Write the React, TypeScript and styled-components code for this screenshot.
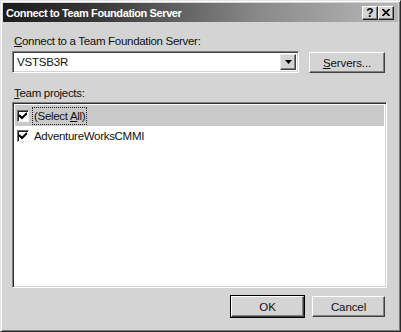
import React from "react";
import styled, { createGlobalStyle } from "styled-components";

const GlobalStyle = createGlobalStyle`
  html, body {
    margin: 0;
    padding: 0;
    background: #d4d4d4;
  }
  * {
    box-sizing: border-box;
  }
`;

const Window = styled.div`
  width: 401px;
  height: 332px;
  background: #d4d4d4;
  border-top: 1px solid #e4e4e4;
  border-left: 1px solid #e4e4e4;
  border-right: 1px solid #2a2a2a;
  border-bottom: 1px solid #2a2a2a;
  box-shadow: inset 1px 1px 0 #ffffff, inset -1px -1px 0 #7a7a7a;
  padding: 2px;
  display: flex;
  flex-direction: column;
  font-family: "Liberation Sans", Arial, sans-serif;
  font-size: 11px;
  color: #111;
`;

const TitleBar = styled.div`
  height: 19px;
  display: flex;
  align-items: center;
  justify-content: space-between;
  padding: 0 4px 0 3px;
  background: linear-gradient(to right, #1c1c1c 0%, #3a3a3a 25%, #8a8a8a 65%, #b8b8b8 100%);
`;

const Title = styled.span`
  color: #fff;
  font-weight: bold;
  font-size: 11px;
  letter-spacing: -0.4px;
`;

const TitleButtons = styled.div`
  display: flex;
`;

const TitleButton = styled.div`
  width: 16px;
  height: 14px;
  background: #d4d4d4;
  border-top: 1px solid #fff;
  border-left: 1px solid #fff;
  border-right: 1px solid #222;
  border-bottom: 1px solid #222;
  box-shadow: inset -1px -1px 0 #808080;
  display: flex;
  align-items: center;
  justify-content: center;
  font-weight: bold;
  font-size: 12px;
  color: #000;
  line-height: 1;
`;

const Content = styled.div`
  flex: 1;
  display: flex;
  flex-direction: column;
  padding: 12px 12px 0 9px;
`;

const Label = styled.div<{ $top?: number }>`
  font-size: 11.5px;
  line-height: 14px;
  margin-left: 2px;
  margin-top: ${(p) => p.$top ?? 0}px;
  letter-spacing: -0.3px;
`;

const Key = styled.span`
  text-decoration: underline;
  text-underline-offset: 1px;
`;

const ServerRow = styled.div`
  display: flex;
  align-items: flex-start;
  gap: 9px;
  margin-top: 3px;
`;

const Combo = styled.div`
  width: 287px;
  height: 22px;
  background: #fff;
  border-top: 1px solid #808080;
  border-left: 1px solid #808080;
  border-right: 1px solid #fff;
  border-bottom: 1px solid #fff;
  box-shadow: inset 1px 1px 0 #404040, inset -1px -1px 0 #d4d4d4;
  display: flex;
  align-items: center;
  padding: 2px 2px 2px 4px;
`;

const ComboText = styled.span`
  flex: 1;
  font-size: 11.5px;
  letter-spacing: -0.2px;
`;

const DropButton = styled.div`
  width: 16px;
  height: 16px;
  background: #d4d4d4;
  border-top: 1px solid #e8e8e8;
  border-left: 1px solid #e8e8e8;
  border-right: 1px solid #404040;
  border-bottom: 1px solid #404040;
  box-shadow: inset -1px -1px 0 #808080;
  display: flex;
  align-items: center;
  justify-content: center;
`;

const PushButton = styled.div<{ $def?: boolean; $w: number }>`
  width: ${(p) => p.$w}px;
  height: 23px;
  background: #d4d4d4;
  border: 1px solid ${(p) => (p.$def ? "#000" : "transparent")};
  display: flex;
  font-size: 11.5px;
`;

const PushFace = styled.div`
  flex: 1;
  border-top: 1px solid #fff;
  border-left: 1px solid #fff;
  border-right: 1px solid #404040;
  border-bottom: 1px solid #404040;
  box-shadow: inset -1px -1px 0 #808080;
  display: flex;
  align-items: center;
  justify-content: center;
  letter-spacing: -0.1px;
`;

const ListBox = styled.div`
  margin-top: 2px;
  height: 186px;
  width: 375px;
  background: #fff;
  border-top: 1px solid #808080;
  border-left: 1px solid #808080;
  border-right: 1px solid #fff;
  border-bottom: 1px solid #fff;
  box-shadow: inset 1px 1px 0 #303030, inset -1px -1px 0 #d4d4d4;
  padding: 2px 2px;
  display: flex;
  flex-direction: column;
`;

const Row = styled.div<{ $sel?: boolean }>`
  height: ${(p) => (p.$sel ? 21 : 20)}px;
  display: flex;
  align-items: center;
  padding-left: 2px;
  background: ${(p) => (p.$sel ? "#c9c9c9" : "transparent")};
`;

const Check = styled.div`
  width: 12px;
  height: 12px;
  background: #fff;
  border-top: 1px solid #707070;
  border-left: 1px solid #707070;
  border-right: 1px solid #f4f4f4;
  border-bottom: 1px solid #f4f4f4;
  box-shadow: inset 1px 1px 0 #202020;
  display: flex;
  align-items: center;
  justify-content: center;
  margin-right: 4px;
`;

const ItemText = styled.span<{ $focus?: boolean }>`
  font-size: 11.5px;
  line-height: 14px;
  padding: 1px 1px;
  outline: ${(p) => (p.$focus ? "1px dotted #222" : "none")};
  outline-offset: 0;
  letter-spacing: -0.3px;
`;

const Footer = styled.div`
  display: flex;
  justify-content: flex-end;
  gap: 6px;
  margin-top: 7px;
`;

const Tick = () => (
  <svg width="8" height="8" viewBox="0 0 8 8">
    <path d="M0 3 L3 6 L8 1" stroke="#000" strokeWidth="2" fill="none" />
  </svg>
);

const Arrow = () => (
  <svg width="7" height="4" viewBox="0 0 7 4">
    <path d="M0 0 H7 L3.5 4 Z" fill="#000" />
  </svg>
);

const App: React.FC = () => {
  return (
    <>
      <GlobalStyle />
      <Window>
        <TitleBar>
          <Title>Connect to Team Foundation Server</Title>
          <TitleButtons>
            <TitleButton>?</TitleButton>
            <TitleButton>
              <svg width="8" height="7" viewBox="0 0 8 7">
                <path d="M0.5 0 L7.5 7 M7.5 0 L0.5 7" stroke="#000" strokeWidth="1.6" />
              </svg>
            </TitleButton>
          </TitleButtons>
        </TitleBar>
        <Content>
          <Label>
            <Key>C</Key>onnect to a Team Foundation Server:
          </Label>
          <ServerRow>
            <Combo>
              <ComboText>VSTSB3R</ComboText>
              <DropButton>
                <Arrow />
              </DropButton>
            </Combo>
            <PushButton $w={78}>
              <PushFace>
                <span>
                  <Key>S</Key>ervers...
                </span>
              </PushFace>
            </PushButton>
          </ServerRow>
          <Label $top={12}>
            <Key>T</Key>eam projects:
          </Label>
          <ListBox>
            <Row $sel>
              <Check>
                <Tick />
              </Check>
              <ItemText $focus>
                (Select <Key>A</Key>ll)
              </ItemText>
            </Row>
            <Row>
              <Check>
                <Tick />
              </Check>
              <ItemText>AdventureWorksCMMI</ItemText>
            </Row>
          </ListBox>
          <Footer>
            <PushButton $def $w={75}>
              <PushFace>OK</PushFace>
            </PushButton>
            <PushButton $w={75}>
              <PushFace>Cancel</PushFace>
            </PushButton>
          </Footer>
        </Content>
      </Window>
    </>
  );
};

export default App;
